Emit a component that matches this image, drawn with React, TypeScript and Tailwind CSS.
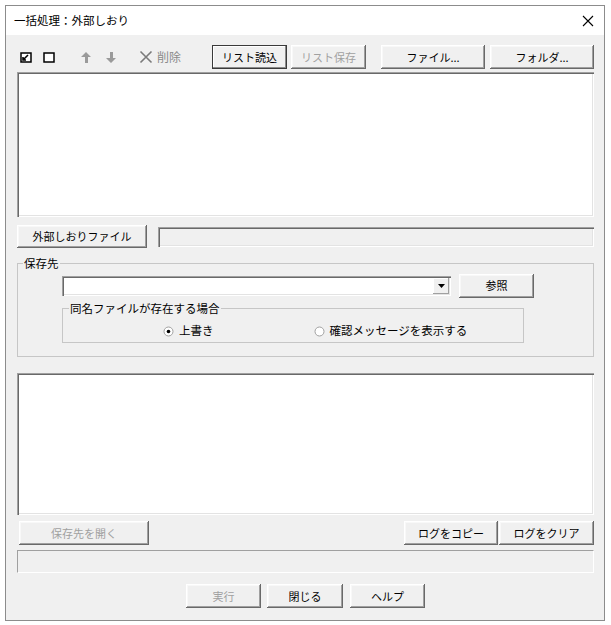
import React from 'react';
import clsx from 'clsx';

const FONT = { fontFamily: '"Noto Sans CJK JP", "Noto Sans", sans-serif' };

type BtnProps = {
  children: React.ReactNode;
  className?: string;
  disabled?: boolean;
  focused?: boolean;
};

const Btn: React.FC<BtnProps> = ({ children, className, disabled, focused }) => (
  <div
    className={clsx(
      'flex items-center justify-center bg-[#f0f0f0] text-[11px] leading-none select-none shrink-0',
      focused
        ? 'border border-[#3a3a3a] shadow-[inset_-1px_-1px_#8a8a8a,inset_1px_1px_#fff]'
        : 'shadow-[inset_-1px_-1px_#696969,inset_1px_1px_#fff,inset_-2px_-2px_#a0a0a0,inset_2px_2px_#f8f8f8]',
      disabled ? 'text-[#a0a0a0]' : 'text-black',
      className
    )}
  >
    {children}
  </div>
);

const Sunken: React.FC<{ className?: string; children?: React.ReactNode }> = ({ className, children }) => (
  <div
    className={clsx(
      'shadow-[inset_1px_1px_#a0a0a0,inset_2px_2px_#696969,inset_-1px_-1px_#fff,inset_-2px_-2px_#e3e3e3]',
      className
    )}
  >
    {children}
  </div>
);

const CheckedIcon = () => (
  <svg width="12" height="11" viewBox="0 0 12 11">
    <rect x="1" y="1" width="10" height="9" fill="#fff" stroke="#000" strokeWidth="1.5" />
    <path d="M3 5 L3 8 L6 8 M4 7 L8 3" stroke="#000" strokeWidth="1.6" fill="none" />
  </svg>
);

const UncheckedIcon = () => (
  <svg width="12" height="11" viewBox="0 0 12 11">
    <rect x="1" y="1" width="10" height="9" fill="#fff" stroke="#000" strokeWidth="1.5" />
  </svg>
);

const ArrowUp = () => (
  <svg width="12" height="13" viewBox="0 0 12 13">
    <path d="M6 1 L11 6 L8 6 L8 12 L5 12 L5 6 L1 6 Z" fill="#9a9a9a" />
  </svg>
);

const ArrowDown = () => (
  <svg width="12" height="13" viewBox="0 0 12 13">
    <path d="M6 12 L11 7 L8 7 L8 1 L5 1 L5 7 L1 7 Z" fill="#9a9a9a" />
  </svg>
);

const Cross = () => (
  <svg width="14" height="14" viewBox="0 0 14 14">
    <path d="M1.5 1.5 L12.5 12.5 M12.5 1.5 L1.5 12.5" stroke="#7a7a7a" strokeWidth="1.6" />
  </svg>
);

const Radio: React.FC<{ checked?: boolean }> = ({ checked }) => (
  <svg width="11" height="11" viewBox="0 0 11 11">
    <circle cx="5.5" cy="5.5" r="4.5" fill="#fff" stroke="#a0a0a0" />
    {checked && <circle cx="5.5" cy="5.5" r="1.8" fill="#000" />}
  </svg>
);

export default function App() {
  return (
    <div className="w-[611px] h-[625px] bg-white pt-[5px] pl-[5px]" style={FONT}>
      <div className="w-[600px] h-[616px] border border-[#8c8c8c] flex flex-col">
        {/* title bar */}
        <div className="h-[29px] bg-white flex items-center justify-between pl-[8px] pr-[10px] shrink-0">
          <span className="text-[11.5px] text-black">一括処理：外部しおり</span>
          <svg width="12" height="12" viewBox="0 0 12 12">
            <path d="M1 1 L11 11 M11 1 L1 11" stroke="#000" strokeWidth="1.1" />
          </svg>
        </div>

        <div className="flex-1 bg-[#f0f0f0] pl-[11px] pr-[10px] flex flex-col">
          {/* toolbar */}
          <div className="mt-[10px] h-[24px] flex items-center">
            <div className="w-[195px] flex items-center shrink-0">
              <div className="ml-[3px] flex items-center"><CheckedIcon /></div>
              <div className="ml-[11px] flex items-center"><UncheckedIcon /></div>
              <div className="ml-[25px] flex items-center"><ArrowUp /></div>
              <div className="ml-[13px] flex items-center"><ArrowDown /></div>
              <div className="ml-[22px] flex items-center gap-[4px]">
                <Cross />
                <span className="text-[12px] text-[#8a8a8a]">削除</span>
              </div>
            </div>
            <Btn focused className="w-[75px] h-[24px]">リスト読込</Btn>
            <Btn disabled className="ml-[4px] w-[75px] h-[24px]">リスト保存</Btn>
            <Btn className="ml-[15px] w-[104px] h-[24px]">ファイル...</Btn>
            <Btn className="ml-[5px] w-[104px] h-[24px]">フォルダ...</Btn>
          </div>

          {/* list */}
          <Sunken className="mt-[3px] h-[145px] bg-white" />

          {/* bookmark file row */}
          <div className="mt-[8px] h-[23px] flex items-center">
            <Btn className="w-[130px] h-[23px]">外部しおりファイル</Btn>
            <Sunken className="ml-[11px] flex-1 h-[20px] bg-[#f0f0f0]" />
          </div>

          {/* save destination group */}
          <fieldset className="mt-[10px] border border-[#c6c6c6] h-[99px]">
            <legend className="ml-[5px] px-[1px] text-[11.5px] leading-none text-black">保存先</legend>
            <div className="pl-[44px] pr-[59px]">
              <div className="mt-[4px] flex items-center">
                <Sunken className="flex-1 h-[20px] bg-white flex items-center justify-end pr-[2px]">
                  <div className="w-[16px] h-[16px] flex items-center justify-center bg-[#f0f0f0] shadow-[inset_-1px_-1px_#a0a0a0,inset_1px_1px_#fff]">
                    <svg width="7" height="4" viewBox="0 0 7 4">
                      <path d="M0 0 L7 0 L3.5 4 Z" fill="#000" />
                    </svg>
                  </div>
                </Sunken>
                <Btn className="ml-[8px] w-[75px] h-[24px]">参照</Btn>
              </div>
              <fieldset className="mt-[5px] mr-[10px] border border-[#c6c6c6] h-[40px]">
                <legend className="ml-[6px] px-[1px] text-[11.5px] leading-none text-black">同名ファイルが存在する場合</legend>
                <div className="flex items-center h-[24px] mt-[5px]">
                  <div className="ml-[100px] flex items-center gap-[5px]">
                    <Radio checked />
                    <span className="text-[11.5px] text-black">上書き</span>
                  </div>
                  <div className="ml-[100px] flex items-center gap-[5px]">
                    <Radio />
                    <span className="text-[11.5px] text-black">確認メッセージを表示する</span>
                  </div>
                </div>
              </fieldset>
            </div>
          </fieldset>

          {/* log */}
          <Sunken className="mt-[16px] h-[142px] bg-white" />

          {/* log buttons */}
          <div className="mt-[6px] h-[24px] flex items-center">
            <Btn disabled className="ml-[2px] w-[130px] h-[24px]">保存先を開く</Btn>
            <div className="flex-1" />
            <Btn className="w-[94px] h-[24px]">ログをコピー</Btn>
            <Btn className="ml-[1px] w-[95px] h-[24px]">ログをクリア</Btn>
          </div>

          {/* status */}
          <div className="mt-[5px] h-[23px] border border-[#a0a0a0] border-r-white border-b-white" />

          {/* bottom buttons */}
          <div className="mt-[11px] h-[24px] flex items-center justify-center">
            <Btn disabled className="w-[75px] h-[24px]">実行</Btn>
            <Btn className="ml-[6px] w-[76px] h-[24px]">閉じる</Btn>
            <Btn className="ml-[7px] w-[75px] h-[24px]">ヘルプ</Btn>
          </div>
        </div>
      </div>
    </div>
  );
}
